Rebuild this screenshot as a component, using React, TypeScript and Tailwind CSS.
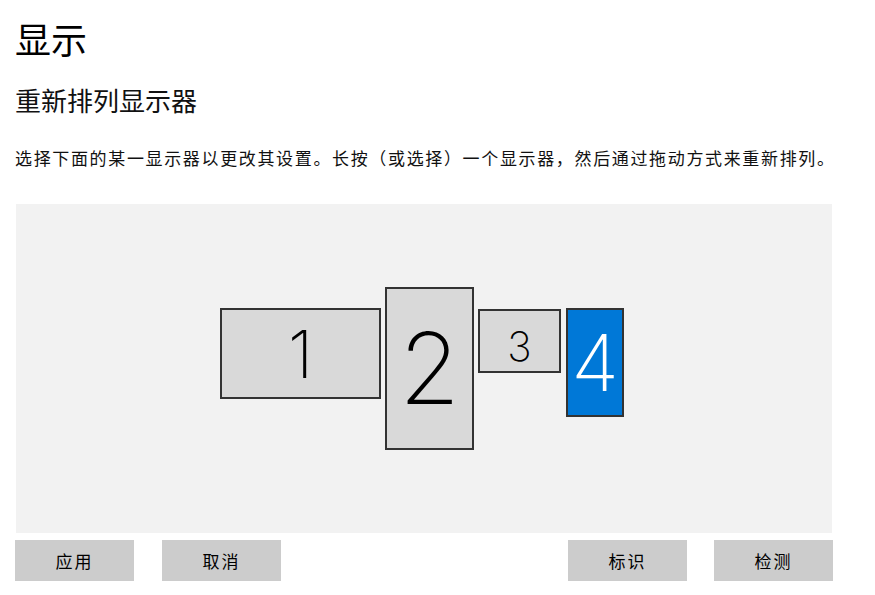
import React from "react";

const cjk = "font-['Microsoft_YaHei','Noto_Sans_CJK_SC',sans-serif]";

const monitors = [
  { n: "1", box: "left-[204px] top-[104px] w-[161px] h-[91px]", text: "text-[66px]", active: false },
  { n: "2", box: "left-[369px] top-[83px] w-[89px] h-[163px]", text: "text-[99px]", active: false },
  { n: "3", box: "left-[462px] top-[105px] w-[83px] h-[64px]", text: "text-[41px] pt-[10px]", active: false },
  { n: "4", box: "left-[550px] top-[104px] w-[58px] h-[109px]", text: "text-[78px]", active: true },
];

function Monitor({ n, box, text, active }: (typeof monitors)[number]) {
  return (
    <div
      className={`absolute flex items-center justify-center border-2 border-[#333333] ${box} ${
        active ? "bg-[#0078d7] text-white" : "bg-[#d9d9d9] text-black"
      }`}
    >
      <span className={`font-['Inter',sans-serif] font-extralight leading-none ${text}`}>{n}</span>
    </div>
  );
}

function Btn({ label }: { label: string }) {
  return (
    <button className="h-[41px] w-[119px] bg-[#cccccc] text-[17px] tracking-[2px] text-black">{label}</button>
  );
}

export default function App() {
  return (
    <div className={`h-[595px] w-[875px] bg-white pl-[15px] pt-[20px] text-black ${cjk}`}>
      <h1 className="h-[36px] text-[36px] leading-[36px] font-normal">显示</h1>
      <h2 className="mt-[31px] h-[26px] text-[26px] leading-[26px] font-normal text-[#111]">重新排列显示器</h2>
      <p className="mt-[36px] h-[18px] text-[17px] leading-[18px] tracking-[1.65px] text-[#111]">
        选择下面的某一显示器以更改其设置。长按（或选择）一个显示器，然后通过拖动方式来重新排列。
      </p>

      <div className="w-[818px]">
        <div className="relative ml-[1px] mt-[37px] h-[329px] w-[816px] bg-[#f2f2f2]">
          {monitors.map((m) => (
            <Monitor key={m.n} {...m} />
          ))}
        </div>

        <div className="mt-[7px] flex items-center">
          <div className="flex gap-[28px]">
            <Btn label="应用" />
            <Btn label="取消" />
          </div>
          <div className="ml-auto flex gap-[27px]">
            <Btn label="标识" />
            <Btn label="检测" />
          </div>
        </div>
      </div>
    </div>
  );
}
